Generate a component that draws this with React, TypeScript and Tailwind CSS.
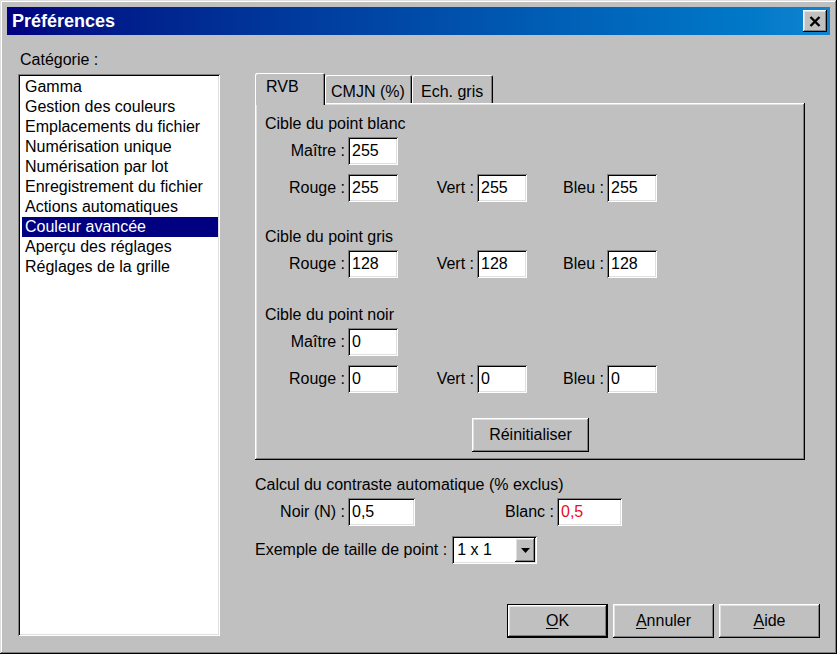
import React from 'react';

// Win98-style bevels
const raised =
  'bg-[#c0c0c0] shadow-[inset_-1px_-1px_0_#000,inset_1px_1px_0_#fff,inset_-2px_-2px_0_#808080,inset_2px_2px_0_#dfdfdf]';
const sunken =
  'bg-white shadow-[inset_1px_1px_0_#808080,inset_-1px_-1px_0_#fff,inset_2px_2px_0_#000,inset_-2px_-2px_0_#dfdfdf]';
const tabEdge = 'rounded-t-[2px] shadow-[inset_1px_1px_0_#fff,inset_-1px_0_0_#000,inset_-2px_0_0_#808080]';

const categories = [
  'Gamma',
  'Gestion des couleurs',
  'Emplacements du fichier',
  'Numérisation unique',
  'Numérisation par lot',
  'Enregistrement du fichier',
  'Actions automatiques',
  'Couleur avancée',
  'Aperçu des réglages',
  'Réglages de la grille',
];

const Field: React.FC<{ value: string; className?: string; red?: boolean }> = ({ value, className = 'w-[50px]', red }) => (
  <div className={`${sunken} ${className} h-[28px] pl-[4px] flex items-center ${red ? 'text-[#e8101c]' : 'text-black'}`}>
    {value}
  </div>
);

const Pair: React.FC<{ label: string; value: string; labelW: string; fieldW?: string; red?: boolean }> = ({
  label,
  value,
  labelW,
  fieldW,
  red,
}) => (
  <div className="flex items-center">
    <div className={`${labelW} text-right pr-[3px] whitespace-nowrap`}>{label}</div>
    <Field value={value} className={fieldW} red={red} />
  </div>
);

const RgbRow: React.FC<{ r: string; g: string; b: string; className?: string }> = ({ r, g, b, className = '' }) => (
  <div className={`flex h-[28px] ${className}`}>
    <Pair label="Rouge :" value={r} labelW="w-[83px]" />
    <Pair label="Vert :" value={g} labelW="w-[79px]" />
    <Pair label="Bleu :" value={b} labelW="w-[80px]" />
  </div>
);

const Button: React.FC<{ children: React.ReactNode; isDefault?: boolean; className?: string }> = ({
  children,
  isDefault,
  className = 'w-[101px] h-[34px]',
}) => (
  <div className={`${className} ${isDefault ? 'border border-black' : ''}`}>
    <div className={`${raised} w-full h-full flex items-center justify-center`}>{children}</div>
  </div>
);

export default function App() {
  return (
    <div className="w-[837px] h-[654px] overflow-hidden bg-[#c0c0c0] text-black text-[16px] leading-[20px] font-['Liberation_Sans',Arial,sans-serif] shadow-[inset_-1px_-1px_0_#000,inset_1px_1px_0_#dfdfdf,inset_-2px_-2px_0_#808080,inset_2px_2px_0_#fff] p-[7px] flex flex-col">
      {/* title bar */}
      <div className="h-[28px] shrink-0 flex items-center justify-between pl-[5px] pr-[3px] bg-gradient-to-r from-[#000080] to-[#1084d0]">
        <span className="text-white font-bold text-[18px] leading-[20px]">Préférences</span>
        <div className={`${raised} w-[24px] h-[22px] flex items-center justify-center`}>
          <svg width="12" height="11" viewBox="0 0 12 11">
            <path d="M1.5 1 L10.5 10 M10.5 1 L1.5 10" stroke="#000" strokeWidth="2.4" />
          </svg>
        </div>
      </div>

      <div className="flex flex-1">
        {/* category list */}
        <div className="ml-[11px] flex flex-col">
          <div className="mt-[15px] pl-[2px]">Catégorie :</div>
          <div className={`${sunken} mt-[4px] w-[202px] h-[562px] pt-[3px] pl-[4px] pr-[2px]`}>
            {categories.map((c) => (
              <div
                key={c}
                className={`h-[20px] pl-[3px] whitespace-nowrap ${c === 'Couleur avancée' ? 'bg-[#000080] text-white' : ''}`}
              >
                {c}
              </div>
            ))}
          </div>
        </div>

        {/* settings */}
        <div className="ml-[35px] mt-[38px] flex flex-col w-[565px]">
          <div className="h-[30px] flex items-end">
            <div className={`relative z-10 h-[32px] -mb-[2px] w-[70px] pl-[11px] pt-[4px] bg-[#c0c0c0] ${tabEdge}`}>RVB</div>
            <div className={`h-[28px] w-[87px] pl-[6px] pt-[7px] ${tabEdge}`}>CMJN (%)</div>
            <div className={`h-[28px] w-[81px] pl-[9px] pt-[7px] ${tabEdge}`}>Ech. gris</div>
          </div>

          <div className={`${raised} w-[550px] h-[357px] pl-[10px] pt-[11px] flex flex-col`}>
            <div>Cible du point blanc</div>
            <div className="mt-[3px] flex h-[28px]">
              <Pair label="Maître :" value="255" labelW="w-[83px]" />
            </div>
            <RgbRow r="255" g="255" b="255" className="mt-[9px]" />

            <div className="mt-[25px]">Cible du point gris</div>
            <RgbRow r="128" g="128" b="128" className="mt-[3px]" />

            <div className="mt-[27px]">Cible du point noir</div>
            <div className="mt-[3px] flex h-[28px]">
              <Pair label="Maître :" value="0" labelW="w-[83px]" />
            </div>
            <RgbRow r="0" g="0" b="0" className="mt-[9px]" />

            <div className="mt-[25px] ml-[207px]">
              <Button className="w-[117px] h-[34px]">Réinitialiser</Button>
            </div>
          </div>

          <div className="mt-[15px]">Calcul du contraste automatique (% exclus)</div>
          <div className="mt-[3px] flex h-[28px]">
            <Pair label="Noir (N) :" value="0,5" labelW="w-[93px]" fieldW="w-[67px]" />
            <Pair label="Blanc :" value="0,5" labelW="w-[142px]" fieldW="w-[65px]" red />
          </div>

          <div className="mt-[10px] flex items-center h-[28px]">
            <span className="whitespace-nowrap">Exemple de taille de point :</span>
            <div className={`${sunken} ml-[5px] w-[85px] h-[28px] flex items-center justify-between pl-[5px] pr-[2px]`}>
              <span>1 x 1</span>
              <div className={`${raised} w-[20px] h-[24px] flex items-center justify-center`}>
                <svg width="9" height="5" viewBox="0 0 9 5">
                  <path d="M0 0 H9 L4.5 5 Z" fill="#000" />
                </svg>
              </div>
            </div>
          </div>

          <div className="mt-[40px] flex justify-end gap-[5px]">
            <Button isDefault>
              <span>
                <span className="underline underline-offset-2">O</span>K
              </span>
            </Button>
            <Button>
              <span>
                <span className="underline underline-offset-2">A</span>nnuler
              </span>
            </Button>
            <Button>
              <span>
                <span className="underline underline-offset-2">A</span>ide
              </span>
            </Button>
          </div>
        </div>
      </div>
    </div>
  );
}
